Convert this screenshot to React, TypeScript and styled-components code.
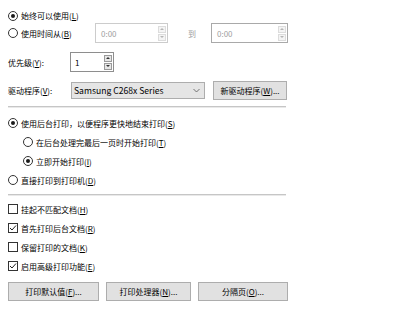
import React from "react";
import styled, { createGlobalStyle } from "styled-components";

const GlobalStyle = createGlobalStyle`
  html, body {
    margin: 0;
    padding: 0;
    background: #ffffff;
  }
  body {
    font-family: "Noto Sans CJK SC", "Noto Sans", sans-serif;
    font-size: 8px;
    color: #000;
  }
`;

const Panel = styled.div`
  width: 279px;
  padding: 8px 0 0 8px;
  display: flex;
  flex-direction: column;
`;

const Row = styled.div<{ h?: number; mt?: number; indent?: number }>`
  display: flex;
  align-items: center;
  height: ${({ h }) => h ?? 18}px;
  margin-top: ${({ mt }) => mt ?? 0}px;
  padding-left: ${({ indent }) => indent ?? 0}px;
  white-space: nowrap;
`;

const Stack = styled.div<{ gap: number; mt: number }>`
  display: flex;
  flex-direction: column;
  gap: ${({ gap }) => gap}px;
  margin-top: ${({ mt }) => mt}px;
`;

const Separator = styled.div<{ mt: number }>`
  height: 1px;
  margin-top: ${({ mt }) => mt}px;
  border-top: 1px solid #c6c6c6;
  background: #e9e9e9;
  width: 278px;
`;

const RadioCircle = styled.span<{ checked?: boolean }>`
  box-sizing: border-box;
  width: 10px;
  height: 10px;
  border: 1px solid #333;
  border-radius: 50%;
  display: inline-flex;
  align-items: center;
  justify-content: center;
  flex: none;
  margin-right: 3px;
  &::after {
    content: "";
    width: 4px;
    height: 4px;
    border-radius: 50%;
    background: ${({ checked }) => (checked ? "#1a1a1a" : "transparent")};
  }
`;

const CheckSquare = styled.span`
  box-sizing: border-box;
  width: 10px;
  height: 10px;
  border: 1px solid #333;
  display: inline-flex;
  align-items: center;
  justify-content: center;
  flex: none;
  margin-right: 3px;
  svg {
    display: block;
  }
`;

const Label = styled.span<{ w?: number; muted?: boolean }>`
  display: inline-flex;
  align-items: center;
  ${({ w }) => (w ? `width: ${w}px;` : "")}
  color: ${({ muted }) => (muted ? "#a0a0a0" : "#000")};
  flex: none;
`;

const TimeBox = styled.div<{ w: number; disabled?: boolean }>`
  box-sizing: border-box;
  width: ${({ w }) => w}px;
  height: 20px;
  border: 1px solid ${({ disabled }) => (disabled ? "#cccccc" : "#a9a9a9")};
  display: flex;
  align-items: center;
  justify-content: space-between;
  padding: 0 1px 0 5px;
  color: #a0a0a0;
  background: #fff;
  flex: none;
`;

const SpinBox = styled.div`
  box-sizing: border-box;
  width: 44px;
  height: 20px;
  border: 1px solid #8e8e8e;
  display: flex;
  align-items: center;
  justify-content: space-between;
  padding: 0 1px 0 4px;
  background: #fff;
  flex: none;
`;

const SpinButtons = styled.div<{ dim?: boolean }>`
  display: flex;
  flex-direction: column;
  gap: 1px;
  span {
    box-sizing: border-box;
    width: 8px;
    height: 7px;
    background: ${({ dim }) => (dim ? "#f4f4f4" : "#e6e6e6")};
    border: 1px solid ${({ dim }) => (dim ? "#dcdcdc" : "#9a9a9a")};
    display: flex;
    align-items: center;
    justify-content: center;
  }
`;

const Arrow = styled.i<{ up?: boolean; dim?: boolean }>`
  width: 0;
  height: 0;
  border-left: 2px solid transparent;
  border-right: 2px solid transparent;
  ${({ up, dim }) =>
    up
      ? `border-bottom: 2px solid ${dim ? "#b5b5b5" : "#333"};`
      : `border-top: 2px solid ${dim ? "#b5b5b5" : "#333"};`}
`;

const To = styled.span`
  color: #a0a0a0;
  margin: 0 15px 0 20px;
`;

const Select = styled.div`
  box-sizing: border-box;
  width: 134px;
  height: 17px;
  margin-left: 1px;
  border: 1px solid #adadad;
  background: #e5e5e5;
  display: flex;
  align-items: center;
  justify-content: space-between;
  padding: 0 4px 0 2px;
  font-size: 8.6px;
  flex: none;
`;

const Button = styled.div<{ w: number; ml?: number }>`
  box-sizing: border-box;
  width: ${({ w }) => w}px;
  height: 19px;
  margin-left: ${({ ml }) => ml ?? 0}px;
  border: 1px solid #adadad;
  background: #e1e1e1;
  display: flex;
  align-items: center;
  justify-content: center;
  flex: none;
`;

const ButtonRow = styled.div`
  display: flex;
  gap: 7px;
  margin-top: 7px;
`;

const Radio = ({ checked, children }: { checked?: boolean; children: React.ReactNode }) => (
  <>
    <RadioCircle checked={checked} />
    <Label>{children}</Label>
  </>
);

const Check = ({ checked, children }: { checked?: boolean; children: React.ReactNode }) => (
  <Row>
    <CheckSquare>
      {checked && (
        <svg width="8" height="8" viewBox="0 0 8 8">
          <polyline points="1,4 3,6 7,1.5" fill="none" stroke="#222" strokeWidth="1" />
        </svg>
      )}
    </CheckSquare>
    <Label>{children}</Label>
  </Row>
);

const Spinner = ({ dim }: { dim?: boolean }) => (
  <SpinButtons dim={dim}>
    <span>
      <Arrow up dim={dim} />
    </span>
    <span>
      <Arrow dim={dim} />
    </span>
  </SpinButtons>
);

export default function App() {
  return (
    <>
      <GlobalStyle />
      <Panel>
        <Row h={15}>
          <Radio checked>
            始终可以使用(<u>L</u>)
          </Radio>
        </Row>
        <Row h={20}>
          <Label w={87}>
            <RadioCircle />
            使用时间从(<u>B</u>)
          </Label>
          <TimeBox w={73} disabled>
            0:00
            <Spinner dim />
          </TimeBox>
          <To>到</To>
          <TimeBox w={77}>
            0:00
            <Spinner dim />
          </TimeBox>
        </Row>
        <Row h={20} mt={9}>
          <Label w={62}>
            优先级(<u>Y</u>):
          </Label>
          <SpinBox>
            1
            <Spinner />
          </SpinBox>
        </Row>
        <Row h={18} mt={9}>
          <Label w={62}>
            驱动程序(<u>V</u>):
          </Label>
          <Select>
            Samsung C268x Series
            <svg width="7" height="5" viewBox="0 0 7 5">
              <polyline points="0.5,1 3.5,4 6.5,1" fill="none" stroke="#555" strokeWidth="0.8" />
            </svg>
          </Select>
          <Button w={74} ml={8}>
            新驱动程序(<u>W</u>)...
          </Button>
        </Row>
        <Separator mt={7} />
        <Stack gap={1} mt={6}>
          <Row>
            <Radio checked>
              使用后台打印，以便程序更快地结束打印(<u>S</u>)
            </Radio>
          </Row>
          <Row indent={15}>
            <Radio>
              在后台处理完最后一页时开始打印(<u>T</u>)
            </Radio>
          </Row>
          <Row indent={15}>
            <Radio checked>
              立即开始打印(<u>I</u>)
            </Radio>
          </Row>
          <Row>
            <Radio>
              直接打印到打印机(<u>D</u>)
            </Radio>
          </Row>
        </Stack>
        <Separator mt={5} />
        <Stack gap={1} mt={4}>
          <Check>
            挂起不匹配文档(<u>H</u>)
          </Check>
          <Check checked>
            首先打印后台文档(<u>R</u>)
          </Check>
          <Check>
            保留打印的文档(<u>K</u>)
          </Check>
          <Check checked>
            启用高级打印功能(<u>E</u>)
          </Check>
        </Stack>
        <ButtonRow>
          <Button w={91}>
            打印默认值(<u>F</u>)...
          </Button>
          <Button w={85}>
            打印处理器(<u>N</u>)...
          </Button>
          <Button w={90}>
            分隔页(<u>O</u>)...
          </Button>
        </ButtonRow>
      </Panel>
    </>
  );
}
